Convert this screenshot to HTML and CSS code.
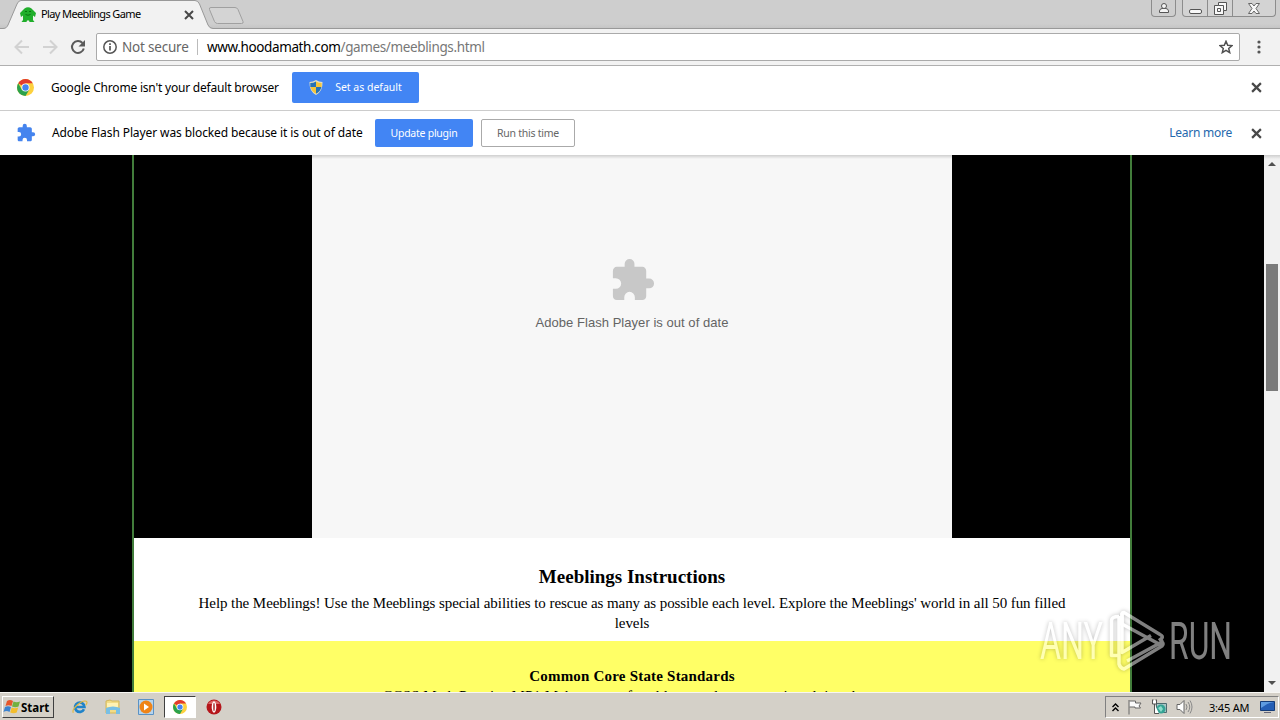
FILE: index.html
```html
<!DOCTYPE html>
<html lang="en">
<head>
    <meta charset="UTF-8">
    <meta name="viewport" content="width=device-width, initial-scale=1.0">
    <title>Play Meeblings Game</title>
    <link rel="stylesheet" href="styles.css">
</head>
<body>
    <svg width="0" height="0" class="defs">
        <symbol id="close" viewBox="0 0 10 10">
            <path d="M1 1l8 8M9 1l-8 8" stroke="#484848" stroke-width="2" fill="none"/>
        </symbol>
        <symbol id="puzzle" viewBox="0 0 24 24">
            <path d="M20.5 11H19V7c0-1.1-.9-2-2-2h-4V3.500a2.500 2.500 0 0 0-5 0V5H4c-1.100 0-2 .9-2 2v3.800h1.500a2.700 2.700 0 0 1 0 5.400H2V20c0 1.100.9 2 2 2h3.800v-1.500a2.700 2.700 0 0 1 5.400 0V22H17c1.100 0 2-.9 2-2v-4h1.500a2.500 2.500 0 0 0 0-5z"/>
        </symbol>
        <symbol id="chrome" viewBox="0 0 16 16">
            <circle cx="8" cy="8" r="8" fill="#fdd13e"/>
            <path d="M8 8L1.100 4A8 8 0 0 1 14.900 4H8z" fill="#e23b2e"/>
            <path d="M1.100 4A8 8 0 0 0 8 16l3.500-6L8 8 4.600 10z" fill="#2ba24c"/>
            <circle cx="8" cy="8" r="3.800" fill="#fff"/>
            <circle cx="8" cy="8" r="3" fill="#4484f0"/>
        </symbol>
    </svg>

    <header class="tabstrip">
        <svg class="tabs" width="260" height="29" viewBox="0 0 260 29">
            <path d="M0 28.500H3C6 28.500 7 27 8 25L17 4Q18.500.5 21 .5H195Q198 .5 199.500 4L208 25Q209.500 28.500 213 28.500V29H0z" fill="#f2f2f2"/>
            <path d="M0 28.500H3C6 28.500 7 27 8 25L17 4Q18.500.5 21 .5H195Q198 .5 199.500 4L208 25Q209.500 28.500 213 28.500H260" fill="none" stroke="#999"/>
            <path d="M211 7.500h24q2 0 3 2l5 12q.8 2-1.500 2h-24q-2 0-3-2l-5-12q-.8-2 1.500-2z" fill="#d4d4d4" stroke="#a0a0a0"/>
        </svg>
        <div class="tab">
            <svg class="favicon" width="16" height="16" viewBox="0 0 16 16">
                <path d="M4.500 1.500q3.500-2.500 7 0L13 3l3 3-1 4-2-1.500V13l1.500 2H9.500l-.5-1.500H7L6.500 15h-5L3 13V8.500L1 10 0 6l3-3z" fill="#20ae2b"/>
                <path d="M5 4.500h2M9 4.500h2M5.500 7.500q2.500 1.500 5 0" stroke="#08750f" fill="none"/>
            </svg>
            <span class="tab-title">Play Meeblings Game</span>
            <svg class="tab-close" width="10" height="10"><use href="#close"/></svg>
        </div>
        <div class="window-buttons">
            <span class="wbtn profile">
                <svg width="12" height="12" viewBox="0 0 12 12"><path d="M1.500 10.500V9q0-2 2.500-2.500h4q2.500.5 2.500 2.500v1.500z" fill="#f5f5f5" stroke="#555"/><circle cx="6" cy="4" r="2.500" fill="#f5f5f5" stroke="#555"/></svg>
            </span>
            <span class="wgroup">
                <span class="wbtn"><svg width="13" height="12" viewBox="0 0 13 12"><rect x=".5" y="7.500" width="12" height="4" rx="1.500" fill="#f8f8f8" stroke="#555"/></svg></span>
                <span class="wbtn"><svg width="13" height="13" viewBox="0 0 13 13"><path d="M4.500.5h8v8h-3v4h-9v-9h4z" fill="#f8f8f8" stroke="#555"/><path d="M4.500 3.500h5v5M3.500 6.500h3v3h-3z" fill="none" stroke="#555"/></svg></span>
                <span class="wbtn wide"><svg width="12" height="11" viewBox="0 0 12 11"><path d="M.5.500h3.500l2 2.500 2-2.500h3.500L8 5.500l3.500 5H8L6 8l-2 2.500H.5l3.500-5z" fill="#f8f8f8" stroke="#666"/></svg></span>
            </span>
        </div>
    </header>

    <nav class="toolbar">
        <svg class="nav-icons" width="96" height="36" viewBox="0 0 96 36" fill="none" stroke-width="2">
            <path d="M29 18H16M22 11.500L15.500 18l6.500 6.500" stroke="#d2d2d2"/>
            <path d="M43 18h13M50 11.500l6.500 6.500-6.500 6.500" stroke="#d2d2d2"/>
            <path d="M82.500 14A6 6 0 1 0 83.800 19.500" stroke="#5a5a5a"/>
            <path d="M85 11v6.500h-6.500z" fill="#5a5a5a"/>
        </svg>
        <div class="omnibox">
            <svg width="14" height="14" viewBox="0 0 14 14"><circle cx="7" cy="7" r="6.200" fill="none" stroke="#555" stroke-width="1.500"/><path d="M7 6v4.500M7 3.300v1.700" stroke="#555" stroke-width="1.700"/></svg>
            <span class="not-secure">Not secure</span>
            <span class="divider"></span>
            <span class="url">www.hoodamath.com<span>/games/meeblings.html</span></span>
            <svg class="star" width="14" height="14" viewBox="0 0 14 14"><path d="M7 1.300l1.700 4 4.300.3-3.300 2.800 1 4.200L7 10.300l-3.700 2.300 1-4.200L1 5.600l4.300-.3z" fill="none" stroke="#505050" stroke-width="1.500"/></svg>
        </div>
        <svg class="menu" width="4" height="14" viewBox="0 0 4 14" fill="#555"><circle cx="2" cy="2" r="1.600"/><circle cx="2" cy="7" r="1.600"/><circle cx="2" cy="12" r="1.600"/></svg>
    </nav>

    <section class="infobar">
        <svg class="info-icon" width="17" height="17"><use href="#chrome"/></svg>
        <span class="info-text">Google Chrome isn't your default browser</span>
        <button class="btn primary default">
            <svg width="14" height="15" viewBox="0 0 14 15">
                <path d="M7 0Q10 2 13.500 2 14 11 7 15 0 11 .5 2 4 2 7 0z" fill="#e3dfc4"/>
                <path d="M7 1.500V7H1.300L1.300 3Q4.500 3 7 1.500zM7 7h5.400Q11.500 11.500 7 13.800z" fill="#2672b5"/>
                <path d="M7 1.500V7h5.600V3Q9.500 3 7 1.500zM7 7H1.600Q2.500 11.500 7 13.800z" fill="#f5c53a"/>
            </svg>
            <span>Set as default</span>
        </button>
        <svg class="info-close" width="11" height="11"><use href="#close"/></svg>
    </section>
    <section class="infobar second">
        <svg class="info-icon" width="20" height="20" fill="#4584ee"><use href="#puzzle"/></svg>
        <span class="info-text flash">Adobe Flash Player was blocked because it is out of date</span>
        <button class="btn primary update"><span>Update plugin</span></button>
        <button class="btn run"><span>Run this time</span></button>
        <a class="learn">Learn more</a>
        <svg class="info-close" width="11" height="11"><use href="#close"/></svg>
    </section>

    <main class="viewport">
        <div class="page">
            <div class="content">
                <div class="game">
                    <div class="plugin">
                        <svg width="47" height="47" viewBox="0 0 24 24" fill="#c8c8c8"><use href="#puzzle"/></svg>
                        <p>Adobe Flash Player is out of date</p>
                    </div>
                </div>
                <div class="instructions">
                    <h2>Meeblings Instructions</h2>
                    <p>Help the Meeblings! Use the Meeblings special abilities to rescue as many as possible each level. Explore the Meeblings' world in all 50 fun filled<br>levels</p>
                </div>
                <div class="standards">
                    <h3>Common Core State Standards</h3>
                    <p>CCSS.Math.Practice.MP1 Make sense of problems and persevere in solving them.</p>
                </div>
            </div>
        </div>
        <div class="scrollbar">
            <span class="arrow up"></span>
            <span class="thumb"></span>
            <span class="arrow down"></span>
        </div>
    </main>

    <footer class="taskbar">
        <div class="start">
            <svg width="18" height="16" viewBox="0 0 18 16">
                <path d="M4 2q3-2 6 0L8.500 7q-3-1.500-6 0z" fill="#e6562b"/>
                <path d="M10.500 2.500q3 1.500 6.500 0L15.500 7.500q-3 1.500-6.500 0z" fill="#72b03f"/>
                <path d="M2 8q3-1.500 6 0l-1.500 5q-3-2-6 0z" fill="#3b82cf"/>
                <path d="M8.700 8.500q3 1.500 6.500 0l-1.500 5q-3 1.500-6.500 0z" fill="#f3bd2d"/>
            </svg>
            <span>Start</span>
        </div>
        <div class="quick">
            <svg width="16" height="16" viewBox="0 0 18 16"><path d="M13.500 10.500A5.300 5.300 0 1 1 14 8H5" fill="none" stroke="#2083c9" stroke-width="3"/><path d="M1.500 14.500C-1 10 11 0 16 1.500q2 1-.5 4.500" fill="none" stroke="#e0b840" stroke-width="1.300"/></svg>
            <svg width="16" height="16" viewBox="0 0 16 16"><path d="M1 2l4-1 2 1h7v12H1z" fill="#f2dc86" stroke="#d2b65b"/><path d="M2 4h11v4H2z" fill="#fff2b4"/><path d="M1 15V9q7-3 14 0v6h-4v-4H5v4z" fill="#78bfe5"/></svg>
            <svg width="16" height="16" viewBox="0 0 16 16"><path d="M.5.500h15v15H.5z" fill="#b6d4ed" stroke="#5a92c5"/><circle cx="8" cy="8" r="6.500" fill="#ef8418"/><path d="M6 4.500l5 3.500-5 3.500z" fill="#fff"/></svg>
            <span class="active"><svg width="14" height="14"><use href="#chrome"/></svg></span>
            <svg width="16" height="16" viewBox="0 0 16 16"><circle cx="8" cy="8" r="7.500" fill="#b5161b"/><path d="M2 5a7 7 0 0 1 12 0z" fill="#dc6767"/><ellipse cx="8" cy="8" rx="2.300" ry="5.800" fill="#fff"/><ellipse cx="8" cy="8" rx=".7" ry="4.200" fill="#a31015"/></svg>
        </div>
        <div class="tray">
            <svg width="7" height="9" viewBox="0 0 7 9"><path d="M.5 4l3-3 3 3M.5 8l3-3 3 3" fill="none" stroke="#000" stroke-width="1.400"/></svg>
            <svg width="16" height="16" viewBox="0 0 16 16"><path d="M2 1v14.500M2.500 2h6v2h5.500l-2 3 1.500 2H8V8H2.500" fill="#fbfbfb" stroke="#666"/></svg>
            <svg width="17" height="16" viewBox="0 0 17 16"><path d="M5.500 4.500h10v9h-10z" fill="#a9c7c6" stroke="#4c6b70"/><circle cx="10" cy="10" r="4.500" fill="#35a394"/><path d="M7 9l3-2 2 3-2 3z" fill="#8edccc"/><path d="M1.500 1v4h4V1M3.500 5v9.500H8M1 1h1.500M4.500 1H6" fill="#fff" stroke="#555"/></svg>
            <svg width="17" height="16" viewBox="0 0 17 16"><path d="M1 5.500h3L8 1.500v13l-4-4H1z" fill="#fff" stroke="#666"/><path d="M10 5q2 3 0 6M12 3q3.500 5 0 10M14 1.500q4 6.500 0 13" fill="none" stroke="#888"/></svg>
            <span class="clock">3:45 AM</span>
            <svg width="15" height="14" viewBox="0 0 15 14"><path d="M.5 1.500h14v9H.5z" fill="#245eb5" stroke="#153c78"/><path d="M1 2h13Q7 3 1 8z" fill="#5e9be0"/><path d="M4 12.500h7" stroke="#667"/></svg>
        </div>
    </footer>

    <svg class="watermark" width="200" height="68" viewBox="1035 606 200 68">
        <g font-family="Roboto, sans-serif" font-size="51.500" fill="#fff">
            <text x="1040" y="659" textLength="63" lengthAdjust="spacingAndGlyphs">ANY</text>
            <text x="1169" y="659" textLength="63" lengthAdjust="spacingAndGlyphs">RUN</text>
        </g>
        <g fill="none" stroke="#fff" stroke-width="3.500" stroke-linejoin="round">
            <path d="M1119 655.500h-7.500v-35q0-4 7.500-4"/>
            <path d="M1159 640.500l3-2.500c1-2-1-3-2-3.500l-36-22q-2-.5-2 2v38l29-17"/>
            <path d="M1122 613v11l37 20c4 1.500 4-3 1-5M1119 616v48q1 4 5 5l38-23q2-2 0-4l-35 19"/>
        </g>
    </svg>
</body>
</html>
```
FILE: styles.css
```css
* {
    box-sizing: border-box;
}
body {
    position: relative;
    display: flex;
    flex-direction: column;
    width: 1280px;
    height: 720px;
    margin: 0;
    overflow: hidden;
    background-color: #000;
    font-family: "Noto Sans", sans-serif;
    white-space: nowrap;
}
h2, h3, p {
    margin: 0;
}
svg {
    display: block;
    flex: none;
}
.defs {
    position: absolute;
}
.tabstrip {
    display: flex;
    height: 29px;
    background: linear-gradient(#cecece 85%, #c5c5c5);
    border-bottom: 1px solid #999;
}
.tabs {
    margin-right: -260px;
}
.tab {
    position: relative;
    display: flex;
    align-items: center;
    width: 213px;
    height: 29px;
    padding-left: 20px;
}
.tab-title {
    width: 143px;
    margin-left: 5px;
    padding-bottom: 2px;
    font-size: 11px;
    letter-spacing: -0.62px;
}
.window-buttons {
    display: flex;
    margin-left: auto;
    margin-right: 4px;
}
.wbtn {
    display: flex;
    align-items: center;
    justify-content: center;
    width: 25px;
    height: 16px;
    border-right: 1px solid #8c8c8c;
}
.wbtn.wide {
    width: 42px;
    border-right: 0;
}
.profile, .wgroup {
    height: 17px;
    border: 1px solid #8c8c8c;
    border-top: 0;
    border-radius: 0 0 4px 4px;
}
.wgroup {
    display: flex;
    margin-left: 6px;
    background-color: #d3d3d3;
}
.toolbar {
    display: flex;
    align-items: center;
    height: 37px;
    background-color: #f2f2f2;
    border-bottom: 1px solid #b0b0b0;
}
.omnibox {
    display: flex;
    align-items: center;
    width: 1144px;
    height: 28px;
    padding: 0 6px;
    background-color: #fff;
    border: 1px solid #aaa;
    border-radius: 2px;
    font-size: 13.5px;
}
.not-secure {
    width: 75px;
    margin-left: 5px;
    color: #666;
    letter-spacing: -0.2px;
}
.divider {
    width: 1px;
    height: 16px;
    margin-right: 9px;
    background-color: #bbb;
}
.url {
    letter-spacing: -0.37px;
}
.url span {
    color: #777;
}
.star {
    margin-left: auto;
}
.menu {
    margin-left: 17px;
}
.infobar {
    display: flex;
    align-items: center;
    height: 45px;
    padding: 0 18px 2px 17px;
    background-color: #fff;
    border-bottom: 1px solid #ccc;
    font-size: 12px;
}
.infobar.second {
    height: 44px;
    padding: 0 18px 0 16px;
    border-bottom: 0;
}
.info-text {
    width: 241px;
    margin-left: 17px;
    letter-spacing: -0.2px;
}
.info-text.flash {
    width: 323px;
    margin-left: 16px;
    padding-bottom: 1px;
    letter-spacing: -0.1px;
}
.btn {
    display: flex;
    align-items: center;
    justify-content: center;
    height: 28px;
    padding: 0;
    border: 1px solid #aaa;
    border-radius: 2px;
    background-color: #fff;
    color: #666;
    font: 10.5px "Noto Sans", sans-serif;
    letter-spacing: -0.25px;
}
.btn.primary {
    border: 0;
    background-color: #4285f4;
    color: #fff;
}
.btn.default {
    width: 127px;
    height: 31px;
    gap: 12px;
    letter-spacing: 0;
}
.update {
    width: 98px;
}
.run {
    width: 94px;
    margin-left: 8px;
}
.info-close {
    margin-left: auto;
}
.learn {
    margin-left: auto;
    padding-bottom: 1px;
    color: #2468ad;
    letter-spacing: -0.25px;
}
.learn + .info-close {
    margin-left: 19px;
}
.viewport {
    display: flex;
    height: 537px;
}
.page {
    width: 1264px;
    padding: 0 132px;
    overflow: hidden;
    background-color: #000;
}
.content {
    width: 1000px;
    height: 600px;
    border: solid #427d3b;
    border-width: 0 2px;
    background-color: #ff6;
    font-family: "Liberation Serif", serif;
    font-size: 15px;
    text-align: center;
}
.game {
    display: flex;
    justify-content: center;
    height: 383px;
    background-color: #000;
}
.plugin {
    display: flex;
    flex-direction: column;
    align-items: center;
    width: 640px;
    padding-top: 102px;
    background: linear-gradient(#cfcfcf, #f7f7f7 4px);
    color: #646464;
    font: 13px/20px "Liberation Sans", sans-serif;
}
.plugin p {
    margin-top: 9px;
    letter-spacing: 0.04px;
}
.instructions {
    height: 103px;
    padding-top: 28px;
    background-color: #fff;
    line-height: 20px;
}
.instructions h2 {
    margin-bottom: 6px;
    font-size: 19px;
    line-height: 21px;
}
.instructions p {
    letter-spacing: -0.075px;
}
.standards {
    padding-top: 25px;
    line-height: 20px;
    letter-spacing: 0.06px;
}
.standards h3 {
    font-size: 15px;
    letter-spacing: 0.2px;
}
.scrollbar {
    display: flex;
    flex-direction: column;
    align-items: center;
    width: 16px;
    padding: 7px 0;
    background: linear-gradient(#cfcfcf, #f1f1f1 4px);
}
.arrow {
    border: 4px solid transparent;
}
.up {
    border-top: 0;
    border-bottom-color: #505050;
}
.down {
    margin-top: auto;
    border-bottom: 0;
    border-top-color: #505050;
}
.thumb {
    width: 12px;
    height: 127px;
    margin-top: 98px;
    background-color: #7b7b7b;
}
.taskbar {
    display: flex;
    align-items: center;
    height: 28px;
    padding: 1px 1px 0 2px;
    background-color: #d4d0c8;
    border-top: 1px solid #f7f6f3;
}
.start {
    display: flex;
    align-items: center;
    width: 52px;
    height: 22px;
    border: 1px solid;
    border-color: #fff #404040 #404040 #fff;
    font-size: 11.5px;
    font-weight: bold;
}
.quick {
    display: flex;
    align-items: center;
    margin-left: 18px;
}
.quick > * {
    margin-right: 17px;
}
.quick .active {
    display: flex;
    align-items: center;
    justify-content: center;
    width: 32px;
    height: 22px;
    margin: 0 10px 0 -7px;
    background-color: #fff;
    border: 1px solid;
    border-color: #404040 #fff #fff #404040;
}
.tray {
    display: flex;
    align-items: center;
    width: 174px;
    height: 22px;
    margin-left: auto;
    padding-left: 6px;
    gap: 8px;
    border: 1px solid;
    border-color: #808080 #fff #fff #808080;
}
.clock {
    width: 43px;
    margin-left: 8px;
    font-size: 11px;
    letter-spacing: -0.2px;
}
.watermark {
    position: absolute;
    left: 1035px;
    top: 606px;
    opacity: 0.5;
    filter: drop-shadow(0 0 2px rgba(0, 0, 0, 0.5));
}
```
